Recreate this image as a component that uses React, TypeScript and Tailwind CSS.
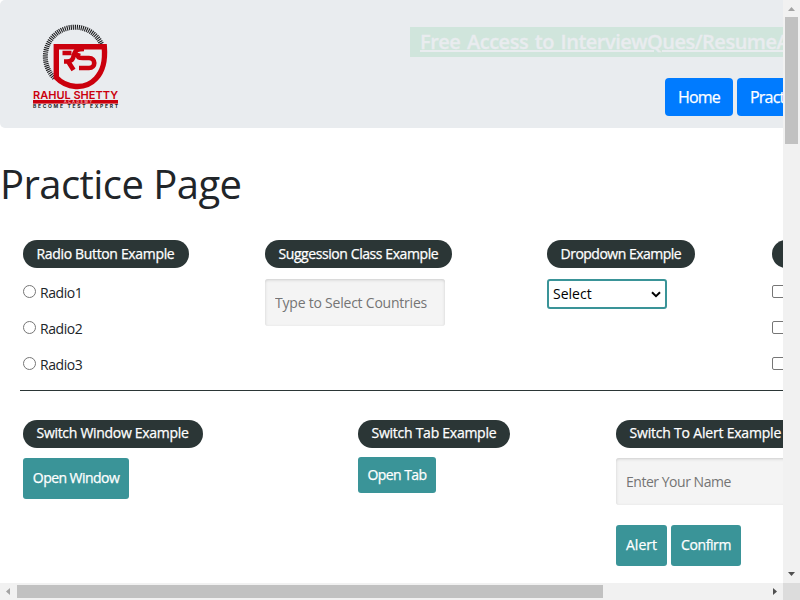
import React from "react";

function Logo() {
  return (
    <svg width="88" height="92" viewBox="32 20 88 92" className="block" aria-label="Rahul Shetty Academy">
      <path d="M54.500 78 A29.500 29.500 0 1 1 101.500 44" fill="none" stroke="#1d1d1f" strokeWidth="5" strokeDasharray="1.1 0.9" />
      <path d="M56.300 46.700 H104.300 C105.500 62 103 71 96 78.500 C85 90.500 66 88 56.300 77.500 Z" fill="none" stroke="#cb000d" strokeWidth="5.400" />
      <path d="M62.500 53 H71.500 M64 61.500 H67 C72 61.500 73 59 74 55 C75.500 49.500 78 49 84 49 M67.500 60.500 L73.500 70 M78.500 53 C77 58 79 58 83 58 H89 C96 58 96 68 89 68 H79" fill="none" stroke="#cb000d" strokeWidth="4.700" />
      <text x="33" y="98.500" textLength="85" lengthAdjust="spacingAndGlyphs" fontSize="11" fontWeight="600" fontFamily="Inter, sans-serif" fill="#cb000d">RAHUL SHETTY</text>
      <rect x="33" y="100" width="85" height="3.600" fill="#cb000d" />
      <text x="64" y="103.200" textLength="28" fontSize="3.600" fontFamily="Inter, sans-serif" fill="#fff">ACADEMY</text>
      <text x="33" y="108" textLength="85" fontSize="5" fontWeight="700" fontFamily="Inter, sans-serif" fill="#1d1d1f">BECOME TEST EXPERT</text>
    </svg>
  );
}

const stroke = "[-webkit-text-stroke:0.25px_currentColor]";

function Legend({ children, className }: { children: React.ReactNode; className: string }) {
  return <div className={`flex h-7 items-center rounded-full bg-[#2b3636] pl-[13.5px] leading-5 text-white whitespace-nowrap ${stroke} ${className}`}>{children}</div>;
}

function Button({ children, className }: { children: React.ReactNode; className: string }) {
  return <button className={`flex items-center justify-center rounded-[3px] bg-[#3a9498] text-sm text-white whitespace-nowrap ${stroke} ${className}`}>{children}</button>;
}

function NavButton({ children, className }: { children: React.ReactNode; className: string }) {
  return <button className={`h-[38px] shrink-0 rounded bg-[#007bff] px-[13px] text-left text-base tracking-[-0.8px] text-white ${stroke} ${className}`}>{children}</button>;
}

export default function App() {
  return (
    <div className="grid h-[600px] w-[800px] grid-cols-[783px_17px] grid-rows-[583px_17px] overflow-hidden bg-white font-['Open_Sans',sans-serif] text-sm text-[#212529]">
      <main className="min-w-0 overflow-hidden">
        <header className="flex h-32 justify-between rounded-l-[5px] bg-[#e9ecef] pl-8 pt-5">
          <Logo />
          <div className="flex w-[373px] flex-col pt-[7px]">
            <div className="h-[30px] overflow-hidden bg-[#d0e5dc] pl-2.5 text-[20px] font-semibold leading-[30px] tracking-[-0.5px] text-[#e9ecef] underline whitespace-nowrap [-webkit-text-stroke:0.3px_currentColor] [word-spacing:2px]">Free Access to InterviewQues/ResumeAssistance</div>
            <div className="ml-[255px] mt-[21px] flex gap-1 overflow-hidden">
              <NavButton className="w-[68px]">Home</NavButton>
              <NavButton className="w-[90px]">Practice</NavButton>
            </div>
          </div>
        </header>
        <h1 className="mt-8 h-20 text-[40px] leading-[48px] tracking-[-0.55px]">Practice Page</h1>
        <section className="ml-5 flex h-[151px] w-[900px] border-b border-[#2b3636] pl-[3px]">
          <div className="w-[242px] shrink-0">
            <Legend className="w-[166px] tracking-[-0.34px]">Radio Button Example</Legend>
            <div className="pt-[7px]">
              {["Radio1", "Radio2", "Radio3"].map((label) => (
                <label key={label} className="flex h-9 items-center tracking-[-0.45px]">
                  <span className="mb-[3px] mr-1 size-[13px] rounded-full border border-[#767676] bg-white" />
                  {label}
                </label>
              ))}
            </div>
          </div>
          <div className="w-[282px] shrink-0">
            <Legend className="w-[187px] tracking-[-0.42px]">Suggession Class Example</Legend>
            <input placeholder="Type to Select Countries" className="mt-[11px] block h-[47px] w-[180px] rounded-[3px] bg-[#f4f4f4] px-2.5 pb-px tracking-[-0.22px] shadow-[inset_0_1px_3px_#ccc] placeholder:text-[#757575]" />
          </div>
          <div className="w-[225px] shrink-0">
            <Legend className="w-[148px] tracking-[-0.5px]">Dropdown Example</Legend>
            <div className="mt-[11px] flex h-[30px] w-[120px] items-center justify-between rounded-[3px] border-2 border-[#3a9498] bg-white pl-1 pr-1 text-black">
              Select
              <svg width="10" height="7" viewBox="0 0 10 7"><path d="M1 1.300 L5 5.200 L9 1.300" fill="none" stroke="#000" strokeWidth="2" /></svg>
            </div>
          </div>
          <div className="shrink-0">
            <Legend className="w-[150px]">Checkbox Example</Legend>
            <div className="pt-[7px]">
              {["Option1", "Option2", "Option3"].map((label) => (
                <label key={label} className="flex h-9 items-center">
                  <span className="mb-[3px] mr-1 size-[13px] rounded-[2px] border border-[#767676] bg-white" />
                  {label}
                </label>
              ))}
            </div>
          </div>
        </section>
        <section className="flex w-[900px] pl-[23px] pt-[29px]">
          <div className="w-[335px] shrink-0">
            <Legend className="w-[180px] pb-0.5 tracking-[-0.3px]">Switch Window Example</Legend>
            <Button className="mt-2.5 h-[41px] w-[106px] pb-px tracking-[-0.55px]">Open Window</Button>
          </div>
          <div className="w-[258px] shrink-0">
            <Legend className="w-[152px] pb-0.5 tracking-[-0.26px]">Switch Tab Example</Legend>
            <Button className="mt-[9px] h-9 w-[78px] tracking-[-0.55px]">Open Tab</Button>
          </div>
          <div className="shrink-0">
            <Legend className="w-[180px] pb-0.5 tracking-[-0.2px]">Switch To Alert Example</Legend>
            <input placeholder="Enter Your Name" className="mt-2.5 block h-[47px] w-[200px] rounded-[3px] bg-[#f4f4f4] px-2.5 pb-px tracking-[-0.47px] shadow-[inset_0_1px_3px_#ccc] placeholder:text-[#757575]" />
            <div className="mt-5 flex gap-1">
              <Button className="h-[41px] w-[51px] pb-px">Alert</Button>
              <Button className="h-[41px] w-[70px] pb-px tracking-[-0.4px]">Confirm</Button>
            </div>
          </div>
        </section>
      </main>
      <div className="flex flex-col items-center bg-[#f1f1f1]">
        <svg width="17" height="17"><path d="M5 11 L8.500 7 L12 11 Z" fill="#a3a3a3" /></svg>
        <div className="h-[127px] w-[13px] bg-[#c1c1c1]" />
        <svg width="17" height="17" className="mt-auto"><path d="M5 6 H12 L8.500 10 Z" fill="#505050" /></svg>
      </div>
      <div className="flex items-center bg-[#f1f1f1]">
        <svg width="17" height="17"><path d="M10 5 V12 L6 8.500 Z" fill="#a3a3a3" /></svg>
        <div className="h-[13px] w-[586px] bg-[#c1c1c1]" />
        <svg width="17" height="17" className="ml-auto"><path d="M7 5 V12 L11 8.500 Z" fill="#505050" /></svg>
      </div>
      <div className="bg-[#dcdcdc]" />
    </div>
  );
}
